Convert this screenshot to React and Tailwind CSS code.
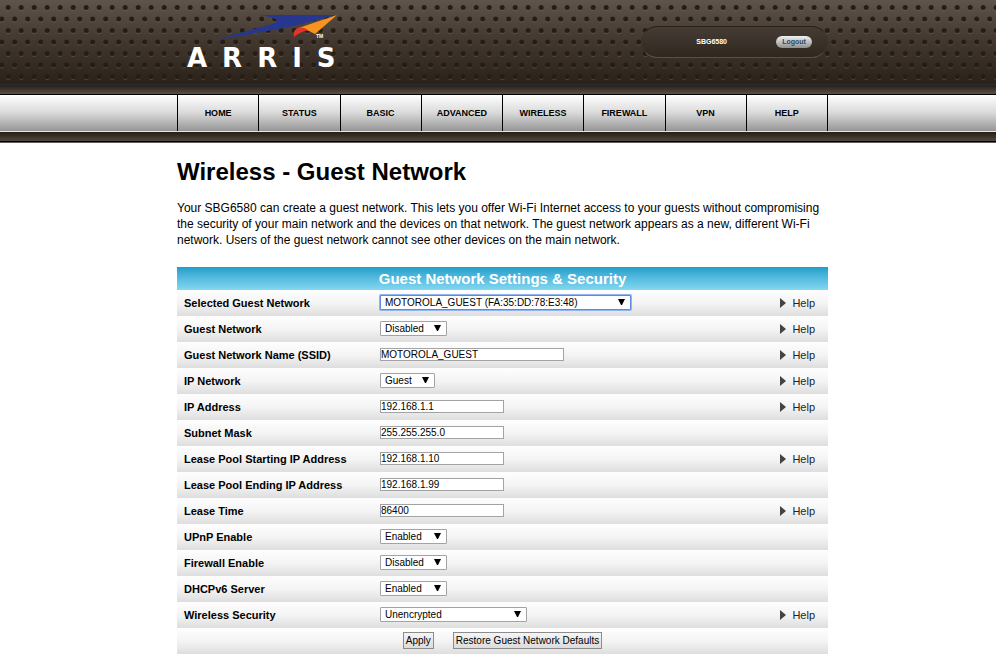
import React from "react";

const navItems = ["HOME", "STATUS", "BASIC", "ADVANCED", "WIRELESS", "FIREWALL", "VPN", "HELP"];

const fields = [
  { id: "selected", label: "Selected Guest Network", type: "select", value: "MOTOROLA_GUEST (FA:35:DD:78:E3:48)", width: "w-[251px]", help: true, focused: true },
  { id: "guest", label: "Guest Network", type: "select", value: "Disabled", other: "Enabled", width: "w-[67px]", help: true },
  { id: "ssid", label: "Guest Network Name (SSID)", type: "text", value: "MOTOROLA_GUEST", width: "w-[184px]", help: true },
  { id: "ipnet", label: "IP Network", type: "select", value: "Guest", width: "w-[55px]", help: true },
  { id: "ip", label: "IP Address", type: "text", value: "192.168.1.1", width: "w-[124px]", help: true },
  { id: "mask", label: "Subnet Mask", type: "text", value: "255.255.255.0", width: "w-[124px]" },
  { id: "start", label: "Lease Pool Starting IP Address", type: "text", value: "192.168.1.10", width: "w-[124px]", help: true },
  { id: "end", label: "Lease Pool Ending IP Address", type: "text", value: "192.168.1.99", width: "w-[124px]" },
  { id: "lease", label: "Lease Time", type: "text", value: "86400", width: "w-[124px]", help: true },
  { id: "upnp", label: "UPnP Enable", type: "select", value: "Enabled", other: "Disabled", width: "w-[67px]" },
  { id: "firewall", label: "Firewall Enable", type: "select", value: "Disabled", other: "Enabled", width: "w-[67px]" },
  { id: "dhcp", label: "DHCPv6 Server", type: "select", value: "Enabled", other: "Disabled", width: "w-[67px]" },
  { id: "security", label: "Wireless Security", type: "select", value: "Unencrypted", width: "w-[147px]", help: true },
];

function Container({ className = "", children }) {
  return <div className={`mx-auto w-full max-w-[660px] pl-[9px] ${className}`}>{children}</div>;
}

function Perforation() {
  return (
    <svg className="absolute inset-0 h-full w-full" aria-hidden="true">
      <defs>
        <linearGradient id="rim" x1="0" y1="0" x2="0" y2="1">
          <stop offset="0.4" stopColor="#7a6d5c" stopOpacity="0" />
          <stop offset="1" stopColor="#7a6d5c" stopOpacity="0.5" />
        </linearGradient>
        <pattern id="holes" width="13" height="23" patternUnits="userSpaceOnUse">
          <circle cx="8.2" cy="8.3" r="2.7" fill="url(#rim)" />
          <circle cx="8.2" cy="7.5" r="2.5" fill="#261e15" />
          <circle cx="1.7" cy="19.8" r="2.7" fill="url(#rim)" />
          <circle cx="1.7" cy="19" r="2.5" fill="#261e15" />
          <circle cx="14.7" cy="19.8" r="2.7" fill="url(#rim)" />
          <circle cx="14.7" cy="19" r="2.5" fill="#261e15" />
        </pattern>
      </defs>
      <rect width="100%" height="100%" fill="url(#holes)" />
    </svg>
  );
}

function Logo() {
  return (
    <div className="flex flex-col pl-[10px] pt-[14px]">
      <svg width="152" height="26" viewBox="0 0 152 26">
        <path d="M72 1 H150 L100 13.5 L34 25 L33 24.5 L84 10.5 Q94 7 86 4 Q80 2 72 1Z" fill="#27378f" />
        <path d="M150 1 L110 14.5 Q115 13 120 16 L128 20 Z" fill="#f7931e" />
        <path d="M107 23 Q105 15 113 13.5 Q118 13 121 16.5 Q114 17 107 23Z" fill="#e5352b" />
        <text x="129" y="24" fontFamily="Liberation Sans" fontWeight="bold" fontSize="5" fill="#fff">TM</text>
      </svg>
      <span className="font-['DejaVu_Sans',sans-serif] text-[26px] font-bold leading-9 tracking-[15px] text-white">
        ARRIS
      </span>
    </div>
  );
}

function SelectField({ field }) {
  const ring = field.focused ? "border-[#5b8ade] ring-1 ring-[#8fb4f3]" : "border-[#a3a3a3]";
  return (
    <div className={`relative ${field.width}`}>
      <select
        id={field.id}
        defaultValue={field.value}
        className={`block h-[15px] w-full appearance-none rounded-[1px] border bg-white pl-1 text-[10px] leading-[13px] text-black outline-none ${ring}`}
      >
        <option>{field.value}</option>
        {field.other && <option>{field.other}</option>}
      </select>
      <svg className="pointer-events-none absolute right-[6px] top-1" width="7" height="6" viewBox="0 0 7 6" aria-hidden="true">
        <path d="M0 0 H7 L4 6 H3Z" fill="#000" />
      </svg>
    </div>
  );
}

function TextField({ field }) {
  return (
    <input
      id={field.id}
      type="text"
      defaultValue={field.value}
      className={`block h-[13px] border border-[#a3a3a3] bg-white text-[10px] leading-[11px] text-black outline-none ${field.width}`}
    />
  );
}

function Row({ field }) {
  return (
    <div className="flex h-[26px] items-center bg-linear-to-b from-[#fefefe] via-[#f4f4f4] to-[#dedede] pl-[7px] pr-[13px]">
      <label htmlFor={field.id} className="w-[196px] shrink-0 text-[11px] font-bold text-black">
        {field.label}
      </label>
      <div className="flex-1 pb-[2px]">
        {field.type === "select" ? <SelectField field={field} /> : <TextField field={field} />}
      </div>
      {field.help && (
        <a href="#help" className="flex items-center gap-[6px] text-[11px] text-[#222]">
          <svg width="6" height="10" viewBox="0 0 6 10" aria-hidden="true">
            <path d="M0 0 L6 5 L0 10Z" fill="#444" />
          </svg>
          Help
        </a>
      )}
    </div>
  );
}

const buttonStyle =
  "h-[17px] border border-[#8c8c8c] bg-linear-to-b from-[#f5f5f5] to-[#dcdcdc] px-[2px] text-[10px] leading-[15px] text-black";

export default function App() {
  return (
    <div className="min-h-screen bg-white font-['Liberation_Sans',Arial,sans-serif]">
      <header>
        <div className="relative h-[85px] border-b border-[#2b2e31] bg-linear-to-b from-[#5e544c] via-[#41372f] to-[#2a221a]">
          <Perforation />
          <Container className="relative flex items-start justify-between">
            <Logo />
            <div className="mt-[26px] flex h-8 w-[187px] items-center justify-end rounded-full border border-t-[#292119] border-x-[#3d342c] border-b-[#5b5047] bg-linear-to-b from-[#453c35] to-[#30271f] pr-[15px]">
              <span className="mr-[49px] text-[7px] font-bold text-white">SBG6580</span>
              <button className="h-3 w-9 rounded-full bg-linear-to-b from-[#f2f2f2] to-[#8f8f8f] text-center text-[7px] font-bold leading-3 text-[#2a4a5c]">
                Logout
              </button>
            </div>
          </Container>
        </div>
        <div className="h-[10px] border-b border-black bg-linear-to-b from-[#261e17] to-[#5b5048]" />
        <nav className="border-b border-[#e4e8e4] bg-linear-to-b from-white via-[#d9d9d9] to-[#969696]">
          <Container>
            <div className="grid grid-cols-8 border-r border-black">
              {navItems.map((item) => (
                <a key={item} href="#nav" className="flex h-9 items-center justify-center border-l border-black pt-px text-[9px] font-bold text-black">
                  {item}
                </a>
              ))}
            </div>
          </Container>
        </nav>
        <div className="h-[10px] border-b border-black bg-linear-to-b from-[#261e14] to-[#51473f]" />
        <div className="h-px bg-[#5c5c5c]" />
      </header>

      <Container>
        <h1 className="pt-[15px] text-[24px] font-bold leading-7 text-black">Wireless - Guest Network</h1>
        <p className="pt-[14px] text-[12px] leading-4 text-black">
          Your SBG6580 can create a guest network. This lets you offer Wi-Fi Internet access to your guests without compromising the security of your main network and the devices on that network. The guest network appears as a new, different Wi-Fi network. Users of the guest network cannot see other devices on the main network.
        </p>
        <form className="mt-[19px]" onSubmit={(event) => event.preventDefault()}>
          <h2 className="h-[23px] bg-linear-to-b from-[#1a9fcb] to-[#82d8f1] text-center text-[15px] font-bold leading-6 text-white">
            Guest Network Settings &amp; Security
          </h2>
          {fields.map((field) => (
            <Row key={field.id} field={field} />
          ))}
          <div className="flex h-[26px] items-center justify-center gap-[19px] bg-linear-to-b from-[#fefefe] via-[#f4f4f4] to-[#dedede] pb-[2px]">
            <button className={buttonStyle}>Apply</button>
            <button className={buttonStyle}>Restore Guest Network Defaults</button>
          </div>
        </form>
      </Container>
    </div>
  );
}
